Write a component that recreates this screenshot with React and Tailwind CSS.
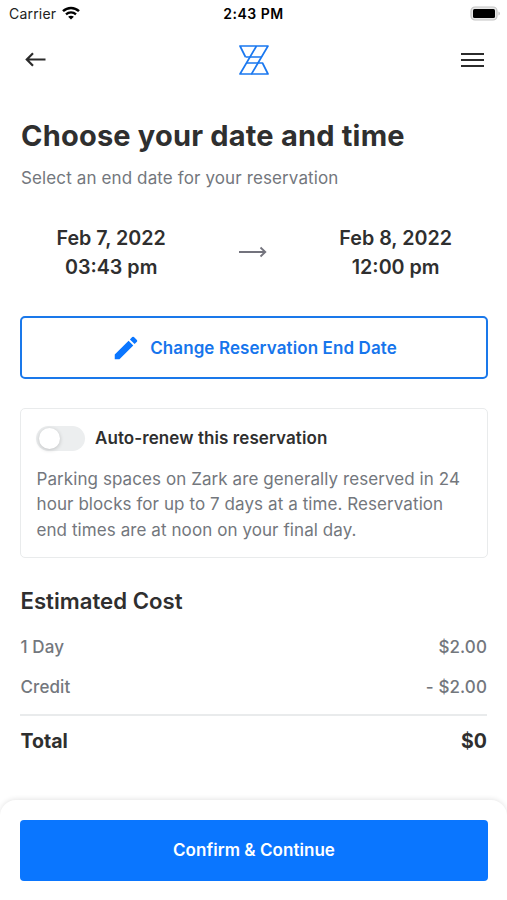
function StatusBar() {
  return (
    <div className="flex h-7 items-center justify-between pr-[6px] pl-[9px] text-black">
      <div className="flex w-[120px] items-center gap-[6px]">
        <span className="-mt-[2px] text-[14px] tracking-[0.2px] text-[#222]">Carrier</span>
        <svg className="-mt-[3px]" width="18" height="14" viewBox="0 0 18 14" fill="none" stroke="currentColor">
          <path d="M1 5.2C5.6 .9 12.4 .9 17 5.2" strokeWidth="2.5" />
          <path d="M4 8.3C6.8 5.7 11.2 5.7 14 8.3" strokeWidth="2.3" />
          <path d="M9 13.6L6.1 10.7C7.7 9.3 10.3 9.3 11.9 10.7Z" fill="currentColor" stroke="none" />
        </svg>
      </div>
      <span className="-mt-[2px] -ml-[3px] text-[14px] font-semibold tracking-[0.5px]">2:43 PM</span>
      <div className="-mt-[2px] flex w-[120px] justify-end">
        <svg width="31" height="15" viewBox="0 0 31 15">
          <rect x="1" y="1" width="26" height="13" rx="4" fill="#e8e8e8" stroke="#c4c4c4" strokeWidth="1.2" />
          <rect x="3" y="3" width="22" height="9" rx="1.5" fill="#000" />
          <path d="M28.5 5.5C30.3 6.3 30.3 8.7 28.5 9.5Z" fill="#bdbdbd" />
        </svg>
      </div>
    </div>
  );
}

function Header() {
  return (
    <header className="flex h-16 items-center justify-between pr-[22px] pl-[25px]">
      <button aria-label="Back" className="w-[24px]">
        <svg width="21" height="16" viewBox="0 0 21 16" fill="none" stroke="#2b2b2b" strokeWidth="2.2">
          <path d="M20.5 7.5H2M8 1.3L1.8 7.5L8 13.7" />
        </svg>
      </button>
      <svg className="-mt-px mr-[2px]" width="30" height="30" viewBox="0 0 30 30" fill="none" stroke="#1a78f0" strokeWidth="1.7" strokeLinejoin="round">
        <path d="M6.5 12L1 1H29L12.5 29H1L17.5 1" />
        <path d="M6.5 12H22.5M8 18H23.5L29 29H12.5" />
      </svg>
      <button aria-label="Menu" className="flex w-[24px] flex-col gap-[4px]">
        <span className="h-[2px] w-[23px] bg-[#2b2b2b]" />
        <span className="h-[2px] w-[23px] bg-[#2b2b2b]" />
        <span className="h-[2px] w-[23px] bg-[#2b2b2b]" />
      </button>
    </header>
  );
}

function CostRow({ label, value }) {
  return (
    <div className="flex h-10 items-center justify-between pl-[0.5px] text-[17px] font-medium tracking-[0.1px] text-[#73777d]">
      <span>{label}</span>
      <span>{value}</span>
    </div>
  );
}

function App() {
  return (
    <div className="flex h-[900px] w-[507px] flex-col overflow-hidden bg-white font-['Inter',sans-serif] text-[#2f2f2f]">
      <StatusBar />
      <Header />
      <main className="flex-1 px-5 pt-6">
        <h1 className="pl-px text-[29px] leading-10 font-bold tracking-[0.2px]">Choose your date and time</h1>
        <p className="mt-[10px] pl-px text-[17px] leading-6 tracking-[0.12px] text-[#73777d]">
          Select an end date for your reservation
        </p>

        <div className="mt-[34px] flex items-center justify-between pr-[35px] pl-[36.5px] text-center text-[19.7px] leading-[29px] font-semibold">
          <div>
            <p>Feb 7, 2022</p>
            <p>03:43 pm</p>
          </div>
          <svg className="-mt-[2px]" width="28" height="12" viewBox="0 0 28 12" fill="none" stroke="#73737d" strokeWidth="1.8">
            <path d="M0 6H26M21.5 1.5L26.3 6L21.5 10.5" />
          </svg>
          <div>
            <p>Feb 8, 2022</p>
            <p>12:00 pm</p>
          </div>
        </div>

        <button className="mt-[34px] flex h-[63px] w-[468px] items-center justify-center gap-[9px] rounded-[5px] border-2 border-[#1a78ea] pt-px text-[17px] font-semibold tracking-[0.1px] text-[#1675ec]">
          <svg className="-mt-px" width="30" height="30" viewBox="0 0 24 24" fill="#0a76ff">
            <path d="M3 17.25V21h3.75L17.81 9.94l-3.75-3.75L3 17.25zM20.71 7.04a1 1 0 0 0 0-1.41l-2.34-2.34a1 1 0 0 0-1.41 0l-1.83 1.83 3.75 3.75 1.83-1.83z" />
          </svg>
          <span className="pt-px">Change Reservation End Date</span>
        </button>

        <section className="mt-[29px] h-[150px] w-[468px] rounded-[5px] border-[1.5px] border-[#e9ebec] px-[15px] pt-4">
          <div className="flex items-center gap-[10px]">
            <div className="flex h-[25px] w-[49px] items-center rounded-full bg-[#eceeef] px-[3px]">
              <span className="size-[21px] rounded-full bg-white shadow-[0_1px_4px_rgba(0,0,0,0.2)]" />
            </div>
            <span className="pt-px text-[17px] font-semibold tracking-[0.08px]">Auto-renew this reservation</span>
          </div>
          <p className="mt-[15px] pl-[0.5px] text-[17px] leading-[25.7px] tracking-[0.08px] whitespace-nowrap text-[#73777d]">
            Parking spaces on Zark are generally reserved in 24
            <br />
            hour blocks for up to 7 days at a time. Reservation
            <br />
            end times are at noon on your final day.
          </p>
        </section>

        <section className="mt-[28px] w-[467px]">
          <h2 className="mb-[12px] pl-[0.5px] text-[22.2px] leading-[30px] font-semibold">Estimated Cost</h2>
          <CostRow label="1 Day" value="$2.00" />
          <CostRow label="Credit" value="- $2.00" />
          <div className="mt-[6px] flex justify-between border-t-2 border-[#e9ebec] pt-[11px] pl-[0.5px] text-[19.5px] leading-7 font-bold">
            <span>Total</span>
            <span>$0</span>
          </div>
        </section>
      </main>
      <footer className="h-[100px] rounded-t-[16px] px-5 pt-5 shadow-[0_-1px_5px_rgba(0,0,0,0.1)]">
        <button className="h-[61px] w-[468px] rounded-[4px] bg-[#0a76ff] pt-px text-[17px] font-semibold tracking-[0.05px] text-white">
          Confirm &amp; Continue
        </button>
      </footer>
    </div>
  );
}

export default App;
